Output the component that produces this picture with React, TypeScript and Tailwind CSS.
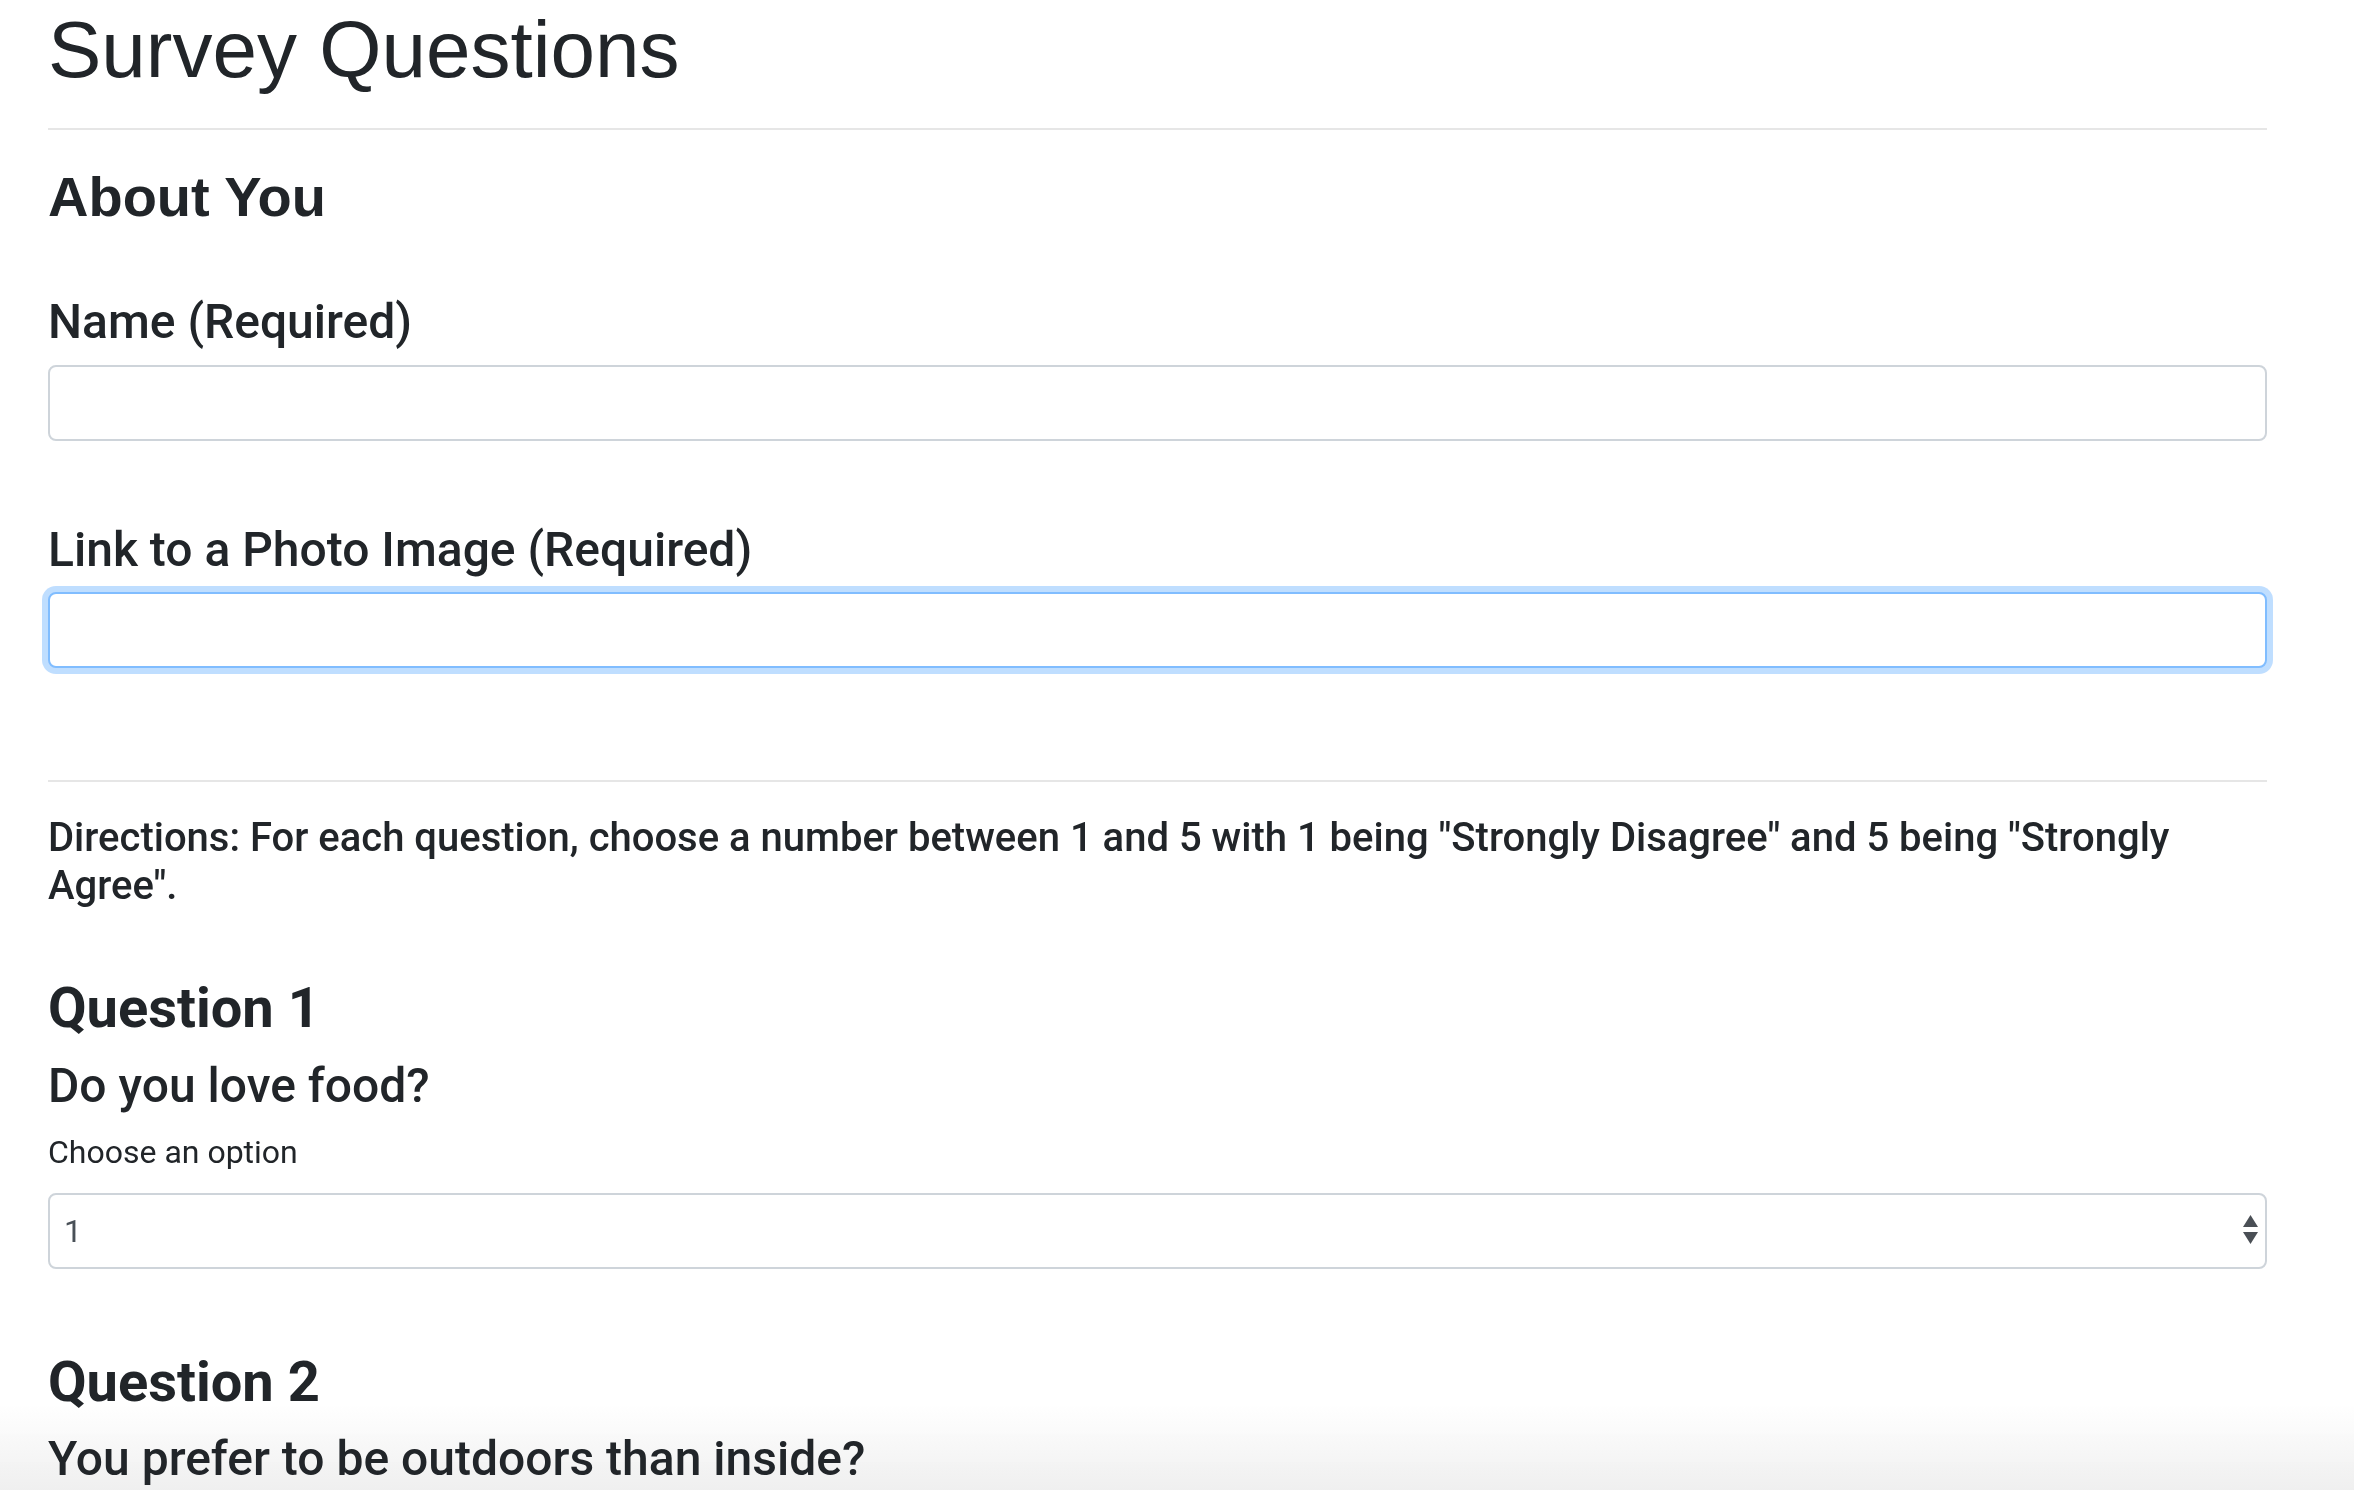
import { useState } from "react";

const font = "font-['Roboto','Liberation_Sans',Arial,sans-serif]";

function Field({ label, focused }: { label: string; focused?: boolean }) {
  return (
    <div className="flex flex-col gap-[14px]">
      <label className="text-[48px] leading-[1.2] font-medium">{label}</label>
      <input
        type="text"
        className={
          focused
            ? "h-[76px] w-full rounded-[8px] border-2 border-[#80bdff] bg-white px-[24px] text-[32px] text-[#495057] outline-none shadow-[0_0_0_6px_rgba(0,123,255,0.25)]"
            : "h-[76px] w-full rounded-[8px] border-2 border-[#ced4da] bg-white px-[24px] text-[32px] text-[#495057] outline-none"
        }
      />
    </div>
  );
}

function Question({ n, text, top }: { n: number; text: string; top: string }) {
  const [value, setValue] = useState("1");
  return (
    <section className={top}>
      <h3 className="text-[56px] leading-[1.2] font-bold">Question {n}</h3>
      <h4 className="mt-[14px] text-[48px] leading-[1.2] font-medium">{text}</h4>
      <label className="mt-[14px] block text-[32px] leading-[1.5]">Choose an option</label>
      <div className="relative mt-[17px]">
        <select
          value={value}
          onChange={(e) => setValue(e.target.value)}
          className="h-[76px] w-full appearance-none rounded-[8px] border-2 border-[#ced4da] bg-white pl-[14px] text-[32px] text-[#495057] outline-none"
        >
          {["1", "2", "3", "4", "5"].map((o) => (
            <option key={o}>{o}</option>
          ))}
        </select>
        <svg
          className="pointer-events-none absolute right-[8px] top-[22px] h-[32px] w-[17px]"
          viewBox="0 0 17 32"
          fill="#4a4f55"
        >
          <path d="M8.5 0 L16 12 L1 12 Z" />
          <path d="M1 17 L16 17 L8.5 29 Z" />
        </svg>
      </div>
    </section>
  );
}

export default function App() {
  return (
    <div className={`relative min-h-screen bg-white text-[#212529] ${font}`}>
      {/* window shading at the bottom edge, behind the page content */}
      <div className="pointer-events-none fixed bottom-0 left-0 right-0 z-0 h-[84px] bg-gradient-to-b from-[#ffffff00] to-[#efefef]" />

      <div className="relative z-10 ml-[48px] w-[2219px] pt-[2px] pb-[200px]">
        <h1 className="text-[80px] leading-[1.2] font-normal font-['Liberation_Sans',Arial,sans-serif]">
          Survey Questions
        </h1>
        <hr className="mt-[30px] border-0 h-[2px] bg-[#e6e6e6]" />

        <h3 className="mt-[33px] text-[56px] leading-[1.2] font-bold font-['Liberation_Sans',Arial,sans-serif]">
          About You
        </h3>
        <div className="mt-[63px]">
          <Field label="Name (Required)" />
        </div>
        <div className="mt-[80px]">
          <Field label="Link to a Photo Image (Required)" focused />
        </div>

        <hr className="mt-[112px] border-0 h-[2px] bg-[#e6e6e6]" />

        <p className="mt-[32px] text-[40px] leading-[1.2] font-medium">
          Directions: For each question, choose a number between 1 and 5 with 1 being "Strongly Disagree" and 5
          being "Strongly Agree".
        </p>

        <Question n={1} text="Do you love food?" top="mt-[65px]" />
        <Question n={2} text="You prefer to be outdoors than inside?" top="mt-[80px]" />
      </div>
    </div>
  );
}
